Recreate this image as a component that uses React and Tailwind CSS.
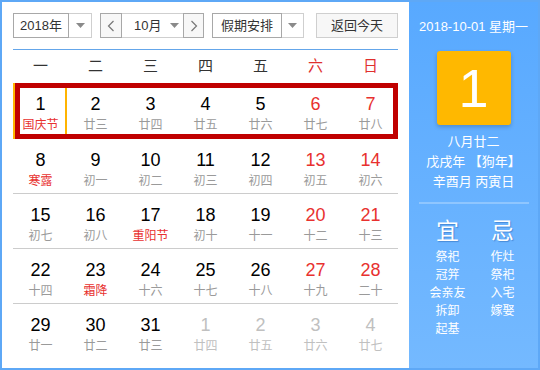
import React from 'react'

const weekdays = ['一', '二', '三', '四', '五', '六', '日']

// [day, lunar, kind] kind: n normal, h holiday(red lunar), d dim (next month)
const rows = [
  [[1, '国庆节', 'h'], [2, '廿三'], [3, '廿四'], [4, '廿五'], [5, '廿六'], [6, '廿七'], [7, '廿八']],
  [[8, '寒露', 'h'], [9, '初一'], [10, '初二'], [11, '初三'], [12, '初四'], [13, '初五'], [14, '初六']],
  [[15, '初七'], [16, '初八'], [17, '重阳节', 'h'], [18, '初十'], [19, '十一'], [20, '十二'], [21, '十三']],
  [[22, '十四'], [23, '霜降', 'h'], [24, '十六'], [25, '十七'], [26, '十八'], [27, '十九'], [28, '二十']],
  [[29, '廿一'], [30, '廿二'], [31, '廿三'], [1, '廿四', 'd'], [2, '廿五', 'd'], [3, '廿六', 'd'], [4, '廿七', 'd']],
]

const yi = ['祭祀', '冠笄', '会亲友', '拆卸', '起基']
const ji = ['作灶', '祭祀', '入宅', '嫁娶']

const Caret = () => (
  <svg width="9" height="5" viewBox="0 0 9 5"><path d="M0 0h9L4.5 5z" fill="#8a8a8a" /></svg>
)

const Chevron = ({ dir }) => (
  <svg width="8" height="12" viewBox="0 0 8 12">
    <path d={dir === 'l' ? 'M6.5 1L1.5 6l5 5' : 'M1.5 1l5 5-5 5'} fill="none" stroke="#777" strokeWidth="1.2" />
  </svg>
)

const Cell = ({ day, lunar, kind, col }) => {
  const weekend = col >= 5
  let numColor = weekend ? 'text-[#e8312f]' : 'text-black'
  let lunarColor = kind === 'h' ? 'text-[#e8312f]' : 'text-[#9a9a9a]'
  if (kind === 'd') { numColor = 'text-[#c0c0c0]'; lunarColor = 'text-[#c0c0c0]' }
  return (
    <div className="flex flex-col items-center pt-[10px]">
      <div className={`text-[18px] leading-[22px] ${numColor}`}>{day}</div>
      <div className={`text-[12px] leading-[16px] mt-[2px] ${lunarColor}`}>{lunar}</div>
    </div>
  )
}

const App = () => {
  return (
    <div className="w-[540px] h-[370px] border-2 border-[#5ea8f6] flex bg-white font-['Liberation_Sans','Noto_Sans_CJK_SC',sans-serif] overflow-hidden">
      <div className="w-[407px] px-[11px] pt-[11px] flex flex-col">
        <div className="flex items-center h-[25px] text-[13px] text-[#333]">
          <div className="flex h-full">
            <div className="w-[56px] border border-[#a8a8a8] flex items-center justify-center">2018年</div>
            <div className="w-[23px] border-y border-r border-[#cfcfcf] flex items-center justify-center"><Caret /></div>
          </div>
          <div className="flex h-full ml-[8px]">
            <div className="w-[22px] border border-[#a8a8a8] bg-[#f7f7f7] flex items-center justify-center"><Chevron dir="l" /></div>
            <div className="w-[61px] border-y border-[#cfcfcf] flex items-center pl-[12px] gap-[9px]">
              <span>10月</span><Caret />
            </div>
            <div className="w-[21px] border border-[#a8a8a8] bg-[#f7f7f7] flex items-center justify-center"><Chevron dir="r" /></div>
          </div>
          <div className="flex h-full ml-[8px]">
            <div className="w-[70px] border border-[#a8a8a8] flex items-center justify-center">假期安排</div>
            <div className="w-[22px] border-y border-r border-[#cfcfcf] flex items-center justify-center"><Caret /></div>
          </div>
          <div className="ml-auto w-[82px] h-full border border-[#cfcfcf] bg-[#f7f7f7] flex items-center justify-center">返回今天</div>
        </div>
        <div className="mt-[11px] h-px bg-[#64a6ea]" />
        <div className="grid grid-cols-7 h-[33px] items-center text-[15px]">
          {weekdays.map((w, i) => (
            <div key={w} className={`text-center ${i >= 5 ? 'text-[#e0302e]' : 'text-[#333]'}`}>{w}</div>
          ))}
        </div>
        <div className="relative">
          {rows.map((r, ri) => (
            <div key={ri} className={`grid grid-cols-7 h-[55px] ${ri > 0 ? 'border-t border-[#cccccc]' : ''}`}>
              {r.map(([d, l, k], ci) => <Cell key={ci} day={d} lunar={l} kind={k} col={ci} />)}
            </div>
          ))}
          <div className="absolute left-0 top-0 w-[54px] h-[56px] border-2 border-[#ffb400]" />
          <div className="absolute left-[2px] top-0 w-[383px] h-[56px] border-[5px] border-[#c00000]" />
        </div>
      </div>
      <div className="flex-1 bg-gradient-to-b from-[#58a9ff] to-[#74b9ff] flex flex-col items-center text-white">
        <div className="mt-[17px] text-[13px] leading-[16px]">2018-10-01 星期一</div>
        <div className="mt-[16px] w-[74px] h-[74px] rounded-[3px] bg-[#ffb800] shadow-[0_2px_4px_rgba(0,0,0,0.2)] flex items-center justify-center text-[54px] leading-none">1</div>
        <div className="mt-[7px] text-[13px] leading-[20px] text-center">
          <div>八月廿二</div>
          <div className="whitespace-pre">戊戌年 【狗年】</div>
          <div>辛酉月 丙寅日</div>
        </div>
        <div className="mt-[10px] w-[110px] h-[2px] bg-[#8fc6ff]" />
        <div className="mt-[14px] flex pl-[3px]">
          <div className="w-[55px] flex flex-col items-center">
            <div className="text-[23px] leading-[27px] [text-shadow:1px_1px_1px_rgba(0,60,140,0.35)]">宜</div>
            <div className="mt-[3px] text-[12px] leading-[18px] text-center">
              {yi.map((t, i) => <div key={i}>{t}</div>)}
            </div>
          </div>
          <div className="w-[55px] flex flex-col items-center">
            <div className="text-[23px] leading-[27px] [text-shadow:1px_1px_1px_rgba(0,60,140,0.35)]">忌</div>
            <div className="mt-[3px] text-[12px] leading-[18px] text-center">
              {ji.map((t, i) => <div key={i}>{t}</div>)}
            </div>
          </div>
        </div>
      </div>
    </div>
  )
}

export default App
